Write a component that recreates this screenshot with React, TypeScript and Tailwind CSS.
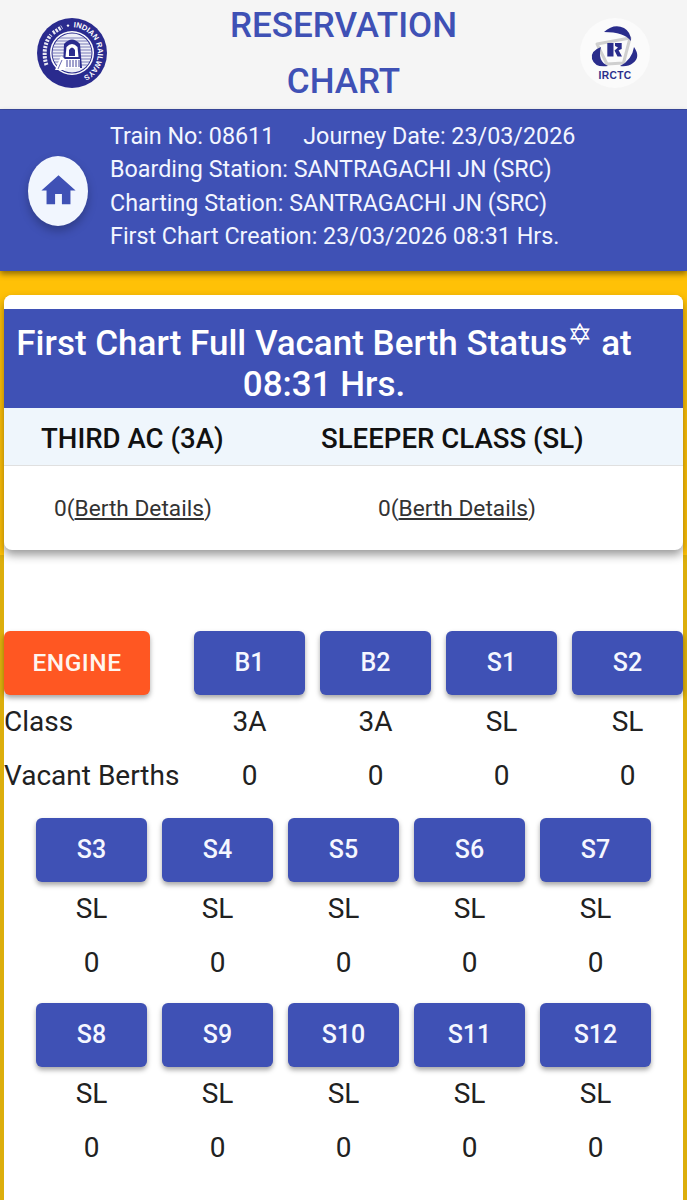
import React from "react";

const BLUE = "#3f51b5";

function RailwaysLogo() {
  return (
    <svg width="70" height="70" viewBox="0 0 70 70">
      <defs>
        <path id="ir-top" d="M 35 35 m -25.8 0 a 25.8 25.8 0 1 1 51.6 0 a 25.8 25.8 0 1 1 -51.6 0" />
        <clipPath id="ir-clip"><circle cx="35" cy="35" r="19.5" /></clipPath>
      </defs>
      <circle cx="35" cy="35" r="35" fill="#2a2b8e" />
      <text fill="#fff" fontSize="7.6" fontWeight="700" fontFamily="'Liberation Sans', sans-serif">
        <textPath href="#ir-top" startOffset="26%">INDIAN RAILWAYS</textPath>
      </text>
      <path d="M9.5 47 C6 37 7.5 24 14 17 M16 15 L25 9" stroke="#fff" strokeWidth="4" strokeDasharray="2.2 1.2" fill="none" opacity="0.9" />
      <circle cx="31" cy="7.6" r="1.2" fill="#fff" />
      <circle cx="35" cy="35" r="22" fill="#fff" />
      <circle cx="35" cy="35" r="20.5" fill="#2a2b8e" />
      <circle cx="35" cy="35" r="19.5" fill="#eeeff8" />
      <g clipPath="url(#ir-clip)" stroke="#2a2b8e" strokeWidth="0.6">
        <path d="M14 20H56M14 23H56M14 26H56M14 29H56M14 32H56M14 35H56M14 38H56M14 41H56M14 44H56M14 47H56" />
      </g>
      <path d="M26 50 L27 26 Q35 17 43 26 L45 50Z" fill="#2a2b8e" />
      <path d="M29.5 29 Q35 23 40.5 29 L41.5 39 H28.5Z" fill="#fff" />
      <path d="M32 38 V32 Q35 27 38 32 V38Z" fill="#2a2b8e" />
      <path d="M28 41H43V50H28Z" fill="#fff" />
      <path d="M30 42V49M33 42V49M36 42V49M39 42V49M42 42V49" stroke="#2a2b8e" strokeWidth="0.9" />
      <path d="M18 52 L24 38 L28 41 L28 52Z" fill="#fff" />
      <path d="M21 51 L25 42" stroke="#2a2b8e" strokeWidth="0.7" />
    </svg>
  );
}

function IrctcLogo() {
  return (
    <svg width="70" height="70" viewBox="0 0 70 70">
      <circle cx="35" cy="35" r="35" fill="#fbfbfb" />
      <path d="M17 26 L50 20 L43.5 45 L27 46 Z" fill="none" stroke="#cfcfcf" strokeWidth="3" strokeLinejoin="round" />
      <path d="M24 14 Q34 5 44 10 Q51 14 51 23 Q44 14 24 14Z" fill="#2a2d8c" />
      <path d="M21 29 Q10 33 12 41 Q15 50 28 48 Q17 43 21 29Z" fill="#2a2d8c" />
      <path d="M54 29 Q61 39 53 45 Q48 49 40 48 Q52 42 54 29Z" fill="#2a2d8c" />
      <path d="M27.3 25 H33.5 V38.5 H27.3Z" fill="#2a2d8c" />
      <path d="M35 25 H41.7 V31 L38.6 32.3 L42 38.5 H37.5 L34.5 32.5 L38 29.5 L35 28Z" fill="#2a2d8c" />
      <text x="35" y="60.8" textAnchor="middle" fontSize="10.2" fontWeight="700" fill="#2a2d8c" letterSpacing="0.4" fontFamily="'Liberation Sans', sans-serif">IRCTC</text>
    </svg>
  );
}

function Coach({ name }: { name: string }) {
  return (
    <div className="w-[111px] h-[64px] rounded-md bg-[#3f51b5] text-[#f5f7ff] text-[25px] font-medium flex items-center justify-center shadow-[0_3px_5px_rgba(0,0,0,0.35)]">
      {name}
    </div>
  );
}

function Cell({ children }: { children: React.ReactNode }) {
  return <div className="h-[54px] flex items-center justify-center text-[28px] text-[#212121]">{children}</div>;
}

function CoachGrid({ names }: { names: string[] }) {
  return (
    <div className="grid grid-cols-[repeat(5,111px)] gap-x-[15px] pl-[32px]">
      {names.map((n) => (
        <Coach key={n} name={n} />
      ))}
      {names.map((n) => (
        <Cell key={n}>SL</Cell>
      ))}
      {names.map((n) => (
        <Cell key={n}>0</Cell>
      ))}
    </div>
  );
}

export default function App() {
  const first = [
    { n: "B1", c: "3A" },
    { n: "B2", c: "3A" },
    { n: "S1", c: "SL" },
    { n: "S2", c: "SL" },
  ];
  return (
    <div className="w-[687px] h-[1200px] overflow-hidden bg-[#ffc107] flex flex-col font-['Roboto',sans-serif]">
      <header className="h-[110px] shrink-0 bg-[#f5f5f5] flex items-start justify-between pl-[37px] pr-[37px] border-b border-[#3a4aa0]">
        <div className="mt-[18px]"><RailwaysLogo /></div>
        <div className="w-[300px] text-center text-[#3f51b5] text-[35px] font-medium leading-[56px] -mt-[2px]">
          RESERVATION<br />CHART
        </div>
        <div className="mt-[18px]"><IrctcLogo /></div>
      </header>

      <section className="h-[161px] shrink-0 bg-[#3f51b5] flex items-center pl-[28px] shadow-[0_3px_6px_rgba(0,0,0,0.45)] relative z-10">
        <div className="w-[60px] h-[70px] rounded-[50%] bg-[#f1f6fe] flex items-center justify-center shadow-[0_5px_10px_rgba(0,0,0,0.25)]">
          <svg width="41" height="41" viewBox="0 0 24 24" fill={BLUE}>
            <path d="M10 20v-6h4v6h5v-8h3L12 3 2 12h3v8z" />
          </svg>
        </div>
        <div className="ml-[22px] text-[#f3f6ff] text-[23.3px] leading-[33.4px] -mt-[8px] whitespace-nowrap">
          <div>Train No: 08611<span className="ml-[29px]">Journey Date: 23/03/2026</span></div>
          <div>Boarding Station: SANTRAGACHI JN (SRC)</div>
          <div>Charting Station: SANTRAGACHI JN (SRC)</div>
          <div>First Chart Creation: 23/03/2026 08:31 Hrs.</div>
        </div>
      </section>

      <div className="flex-1 mt-[24px] flex bg-[linear-gradient(#ffc107_260px,#dcae0c_260px)] px-[4px]">
        <main className="w-full bg-white rounded-t-lg">
          <div className="rounded-lg bg-white pt-[14px] shadow-[0_5px_10px_rgba(0,0,0,0.4)] h-[255px]">
            <div className="h-[99px] bg-[#3f51b5] text-white text-[35px] font-medium leading-[41px] text-center pt-[14px] pr-[39px]">
              First Chart Full Vacant Berth Status<span className="text-[30px] font-normal font-['DejaVu_Sans',sans-serif] leading-none relative -top-[10px]">✡</span> at<br />08:31 Hrs.
            </div>
            <div className="h-[58px] bg-[#eff6fc] border-b border-[#e0e0e0] flex items-center pt-[4px] text-[27.6px] font-medium text-[#111111] whitespace-nowrap">
              <div className="w-[317px] pl-[37px]">THIRD AC (3A)</div>
              <div>SLEEPER CLASS (SL)</div>
            </div>
            <div className="flex h-[83px] items-center pt-[3px] text-[22.7px] text-[#333333] whitespace-nowrap">
              <div className="w-[374px] pl-[50px]">0(<span className="underline">Berth Details</span>)</div>
              <div>0(<span className="underline">Berth Details</span>)</div>
            </div>
          </div>

          <div className="mt-[81px] grid grid-cols-[175px_repeat(4,111px)] gap-x-[15px]">
            <div className="w-[146px] h-[64px] rounded-md bg-[#ff5722] text-[#fff5ee] text-[24.5px] font-medium tracking-[0.5px] flex items-center justify-center shadow-[0_3px_5px_rgba(0,0,0,0.35)]">ENGINE</div>
            {first.map((f) => <Coach key={f.n} name={f.n} />)}
            <div className="h-[54px] flex items-center text-[28px] text-[#212121]">Class</div>
            {first.map((f) => <Cell key={f.n}>{f.c}</Cell>)}
            <div className="h-[54px] flex items-center text-[28px] text-[#212121] whitespace-nowrap">Vacant Berths</div>
            {first.map((f) => <Cell key={f.n}>0</Cell>)}
          </div>

          <div className="mt-[15px] flex flex-col gap-[13px]">
            <CoachGrid names={["S3", "S4", "S5", "S6", "S7"]} />
            <CoachGrid names={["S8", "S9", "S10", "S11", "S12"]} />
          </div>
        </main>
      </div>
    </div>
  );
}
